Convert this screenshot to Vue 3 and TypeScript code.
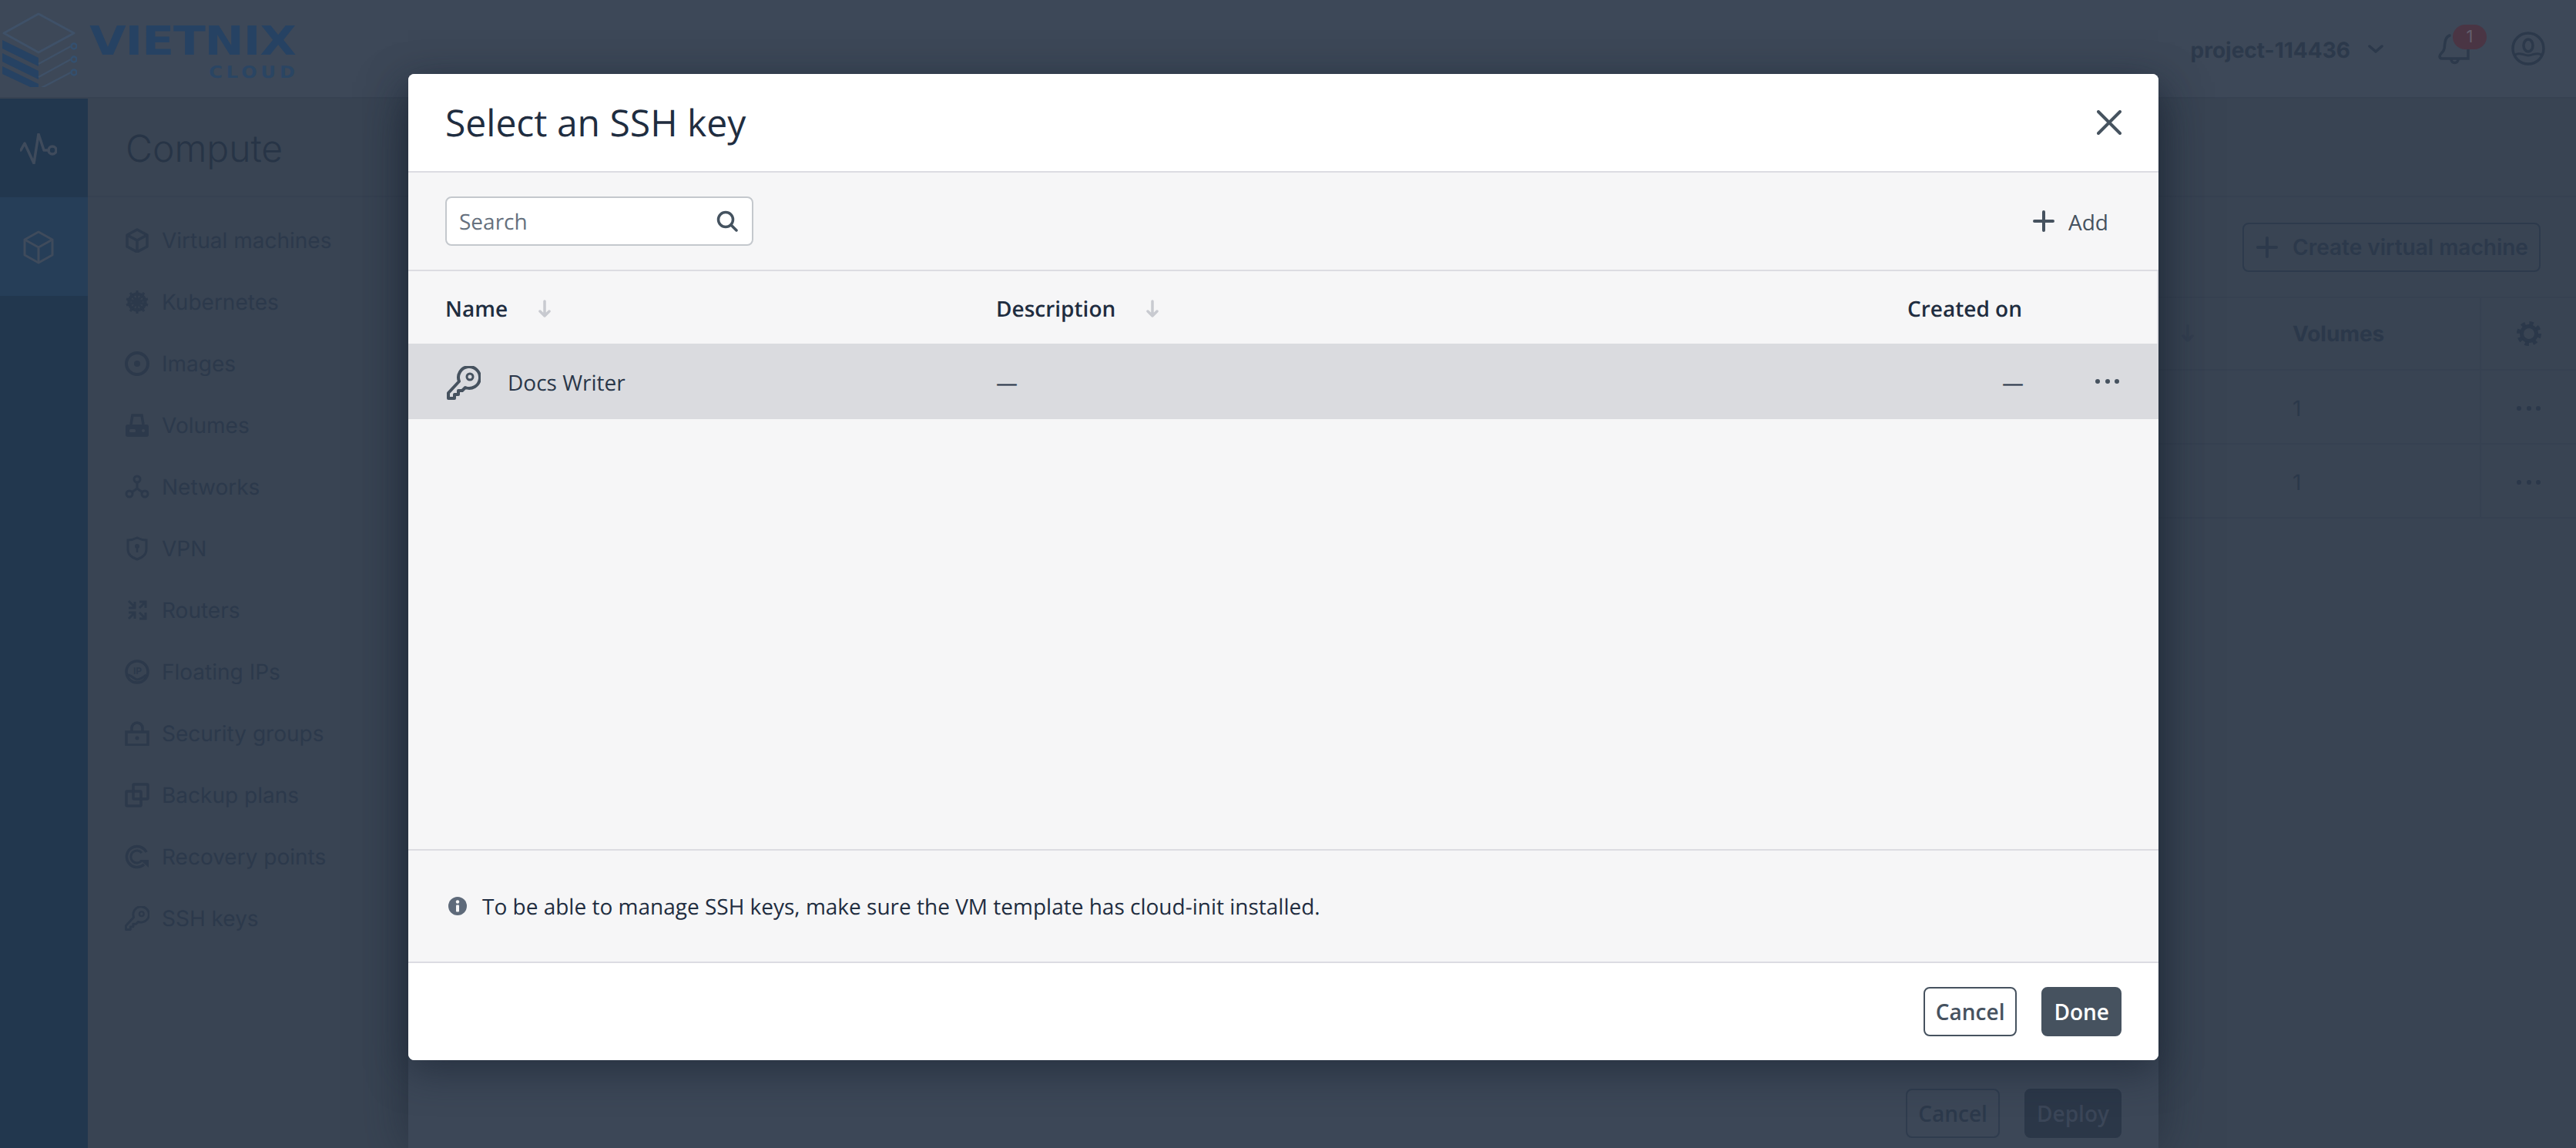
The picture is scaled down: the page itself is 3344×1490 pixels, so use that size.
<script setup lang="ts">
interface NavItem {
  name: string
  icon: string
}

const keyIcon =
  '<path d="M2 42V35L16 20A14 14 0 1 1 24 28L20 32H15V37H10V42Z" fill="none" stroke="currentColor" stroke-width="4" stroke-linejoin="round"/><circle cx="30" cy="14" r="4" fill="none" stroke="currentColor" stroke-width="3"/>'

const navItems: NavItem[] = [
  {
    name: 'Virtual machines',
    icon: '<g fill="none" stroke="currentColor" stroke-width="3.5" stroke-linejoin="round"><path d="M16 2 29 9v15l-13 7-13-7V9Z"/><path d="M3 9l13 7 13-7M16 16v15"/></g>'
  },
  {
    name: 'Kubernetes',
    icon: '<g fill="none" stroke="currentColor"><circle cx="16" cy="16" r="10.5" stroke-width="4"/><path stroke-width="3" d="M16 1v30M2 12l28 8M2 20l28-8M7 28 25 4M25 28 7 4"/></g>'
  },
  {
    name: 'Images',
    icon: '<circle cx="16" cy="16" r="14" fill="none" stroke="currentColor" stroke-width="4"/><circle cx="16" cy="16" r="4" fill="currentColor"/>'
  },
  {
    name: 'Volumes',
    icon: '<path d="M8 15 10 3h12l2 12" fill="none" stroke="currentColor" stroke-width="3.5"/><rect x="1" y="15" width="30" height="16" rx="3" fill="currentColor"/><rect x="6" y="21" width="8" height="4" rx="1.5" fill="#3a4554"/><circle cx="24" cy="23" r="2" fill="#3a4554"/>'
  },
  {
    name: 'Networks',
    icon: '<g fill="none" stroke="currentColor" stroke-width="3"><circle cx="16" cy="6" r="4"/><circle cx="6" cy="25" r="4"/><circle cx="26" cy="25" r="4"/><path d="M16 10v8l-7 5M16 18l7 5"/></g>'
  },
  {
    name: 'VPN',
    icon: '<path d="M16 2c4 2 8 3 12 3v12c0 7-6 11-12 13C10 28 4 24 4 17V5c4 0 8-1 12-3Z" fill="none" stroke="currentColor" stroke-width="3"/><circle cx="16" cy="13" r="3" fill="currentColor"/><path d="M16 13v8" stroke="currentColor" stroke-width="2.5"/>'
  },
  {
    name: 'Routers',
    icon: '<path d="M5 4l8 8M13 5v8H5M19 13l8-8M19 5h8v8M5 27l8-8M5 19h8v8M19 19l8 8M27 19v8h-8" fill="none" stroke="currentColor" stroke-width="3"/>'
  },
  {
    name: 'Floating IPs',
    icon: '<circle cx="16" cy="16" r="14" fill="none" stroke="currentColor" stroke-width="3.5"/><text x="16.5" y="19" text-anchor="middle" font-family="Inter, sans-serif" font-size="12" font-weight="700" fill="currentColor">IP</text><path d="M4 20c5 0 8 6 12 6s7-2 12-6" fill="none" stroke="currentColor" stroke-width="3"/>'
  },
  {
    name: 'Security groups',
    icon: '<path d="M9 15V9a7 7 0 0 1 14 0v6" fill="none" stroke="currentColor" stroke-width="3.5"/><path d="M2 14h28v17H2Z" fill="none" stroke="currentColor" stroke-width="3.5"/><circle cx="16" cy="22" r="2.5" fill="currentColor"/>'
  },
  {
    name: 'Backup plans',
    icon: '<g fill="none" stroke="currentColor" stroke-width="3.5"><rect x="2" y="11" width="19" height="19" rx="1"/><rect x="11" y="2" width="19" height="19" rx="1"/></g>'
  },
  {
    name: 'Recovery points',
    icon: '<path d="M28 10A13.5 13.5 0 1 0 25 26" fill="none" stroke="currentColor" stroke-width="3.5"/><path d="M22 11a8 8 0 1 0 0 10" fill="none" stroke="currentColor" stroke-width="3"/><path d="M20 20h11v10Z" fill="currentColor"/>'
  },
  { name: 'SSH keys', icon: keyIcon }
]

const tableRows = [1, 2]
</script>

<template>
  <div class="page">
    <header class="topbar">
      <div class="brand">
        <svg class="brand-mark" width="100" height="110" viewBox="0 0 100 110">
          <path d="M5 40 50 15l46 25-46 25Z" fill="none" stroke="#3f5168" stroke-width="3" stroke-linejoin="round" />
          <path d="M3 50l47 23v11L3 61ZM3 67l47 23v11L3 78ZM3 84l47 23v9L3 94Z" fill="#264263" transform="translate(0 -1)" />
          <path d="M50 80 92 57M50 97 92 74M50 113 92 91" fill="none" stroke="#3f5168" stroke-width="2.5" />
          <circle cx="96" cy="57" r="3.5" fill="none" stroke="#34506f" stroke-width="2.5" />
          <circle cx="96" cy="74" r="3.5" fill="none" stroke="#34506f" stroke-width="2.5" />
          <circle cx="96" cy="91" r="3.5" fill="none" stroke="#34506f" stroke-width="2.5" />
        </svg>
        <div class="brand-words">
          <span class="brand-name">VIETNIX</span>
          <span class="brand-sub">CLOUD</span>
        </div>
      </div>
      <div class="top-actions">
        <span class="project">project-114436</span>
        <svg class="chevron" width="20" height="12" viewBox="0 0 20 12">
          <path d="M2 2l8 7 8-7" fill="none" stroke="currentColor" stroke-width="3.5" stroke-linecap="round" stroke-linejoin="round" />
        </svg>
        <div class="bell">
          <svg width="44" height="42" viewBox="0 0 44 42">
            <path d="M16 3C10 5 10 12 9 20c-1 6-6 6-6 10q0 3 3 3h34V20" fill="none" stroke="currentColor" stroke-width="3.5" stroke-linecap="round" />
            <path d="M18 34a4.5 4.5 0 0 0 9 0" fill="none" stroke="currentColor" stroke-width="3.5" />
          </svg>
          <span class="badge">1</span>
        </div>
        <svg class="avatar" width="44" height="44" viewBox="0 0 44 44">
          <g fill="none" stroke="currentColor">
            <circle cx="22" cy="22" r="20" stroke-width="3.5" />
            <ellipse cx="22" cy="18" rx="6" ry="8" stroke-width="3.5" />
            <path d="M5 30c6-4 11 1 17 1s11-5 17-1" stroke-width="3" />
          </g>
        </svg>
      </div>
    </header>

    <div class="shell">
      <aside class="rail">
        <div class="rail-item">
          <svg width="48" height="40" viewBox="0 0 48 40">
            <g fill="none" stroke="currentColor" stroke-width="3.5" stroke-linecap="round" stroke-linejoin="round">
              <path d="M1 22 6 13l12 26 6-38 7 21h6" />
              <circle cx="42" cy="22" r="5" />
            </g>
          </svg>
        </div>
        <div class="rail-item rail-active">
          <svg width="40" height="44" viewBox="0 0 40 44">
            <g fill="none" stroke="currentColor" stroke-width="3" stroke-linejoin="round">
              <path d="M20 2 38 12v20L20 42 2 32V12Z" />
              <path d="M2 12l18 10 18-10M20 22v20" />
            </g>
          </svg>
        </div>
      </aside>

      <main class="main">
        <div class="page-title">
          <h1>Compute</h1>
        </div>
        <div class="main-body">
          <nav class="side-nav">
            <a v-for="item in navItems" :key="item.name" class="nav-item">
              <svg
                class="nav-icon"
                width="32"
                height="32"
                :viewBox="item.name === 'SSH keys' ? '0 0 44 44' : '0 0 32 32'"
                v-html="item.icon"
              ></svg>
              <span>{{ item.name }}</span>
            </a>
          </nav>
          <section class="content">
            <div class="content-bar">
              <button class="create-btn">
                <svg width="28" height="28" viewBox="0 0 28 28">
                  <path d="M14 2v24M2 14h24" fill="none" stroke="currentColor" stroke-width="4" stroke-linecap="round" />
                </svg>
                <span>Create virtual machine</span>
              </button>
            </div>
            <div class="bg-table">
              <div class="bg-row bg-head">
                <div class="bg-sort">
                  <svg width="16" height="24" viewBox="0 0 16 24">
                    <path d="M8 2v19M2 15l6 6 6-6" fill="none" stroke="currentColor" stroke-width="3.5" stroke-linecap="round" stroke-linejoin="round" />
                  </svg>
                </div>
                <div class="bg-vol">Volumes</div>
                <div class="bg-act">
                  <svg width="32" height="32" viewBox="0 0 32 32">
                    <circle cx="16" cy="16" r="9.5" fill="none" stroke="currentColor" stroke-width="5" />
                    <circle cx="16" cy="16" r="13.5" fill="none" stroke="currentColor" stroke-width="5" stroke-dasharray="5.3 5.3" />
                  </svg>
                </div>
              </div>
              <div v-for="row in tableRows" :key="row" class="bg-row bg-data">
                <div class="bg-sort"></div>
                <div class="bg-vol bg-num">1</div>
                <div class="bg-act">
                  <span class="dots"><i></i><i></i><i></i></span>
                </div>
              </div>
            </div>
          </section>
        </div>
      </main>
    </div>

    <!-- dimmed wizard panel behind the dialog -->
    <div class="under-panel">
      <div class="under-footer">
        <button class="under-btn">Cancel</button>
        <button class="under-btn under-primary">Deploy</button>
      </div>
    </div>

    <!-- dialog -->
    <section class="modal">
      <header class="modal-head">
        <h2>Select an SSH key</h2>
        <svg width="32" height="32" viewBox="0 0 32 32">
          <path d="M2 2l28 28M30 2 2 30" fill="none" stroke="#46535f" stroke-width="4" stroke-linecap="round" />
        </svg>
      </header>

      <div class="modal-tools">
        <div class="search">
          <span class="search-text">Search</span>
          <svg width="28" height="28" viewBox="0 0 28 28">
            <circle cx="12" cy="12" r="9.5" fill="none" stroke="#44525f" stroke-width="3.5" />
            <path d="M19 19l7 7" stroke="#44525f" stroke-width="3.5" stroke-linecap="round" />
          </svg>
        </div>
        <button class="add-btn">
          <svg width="28" height="28" viewBox="0 0 28 28">
            <path d="M14 2v24M2 14h24" fill="none" stroke="currentColor" stroke-width="4" stroke-linecap="round" />
          </svg>
          <span class="add-label">Add</span>
        </button>
      </div>

      <div class="key-table">
        <div class="key-row key-head">
          <div class="key-cell">
            <span>Name</span>
            <svg class="sort" width="16" height="24" viewBox="0 0 16 24">
              <path d="M8 2v19M2 15l6 6 6-6" fill="none" stroke="currentColor" stroke-width="3.5" stroke-linecap="round" stroke-linejoin="round" />
            </svg>
          </div>
          <div class="key-cell">
            <span>Description</span>
            <svg class="sort" width="16" height="24" viewBox="0 0 16 24">
              <path d="M8 2v19M2 15l6 6 6-6" fill="none" stroke="currentColor" stroke-width="3.5" stroke-linecap="round" stroke-linejoin="round" />
            </svg>
          </div>
          <div class="key-cell key-end">Created on</div>
          <div class="key-cell"></div>
        </div>
        <div class="key-row key-selected">
          <div class="key-cell key-name">
            <svg width="44" height="44" viewBox="0 0 44 44" v-html="keyIcon"></svg>
            <span>Docs Writer</span>
          </div>
          <div class="key-cell">—</div>
          <div class="key-cell key-end">—</div>
          <div class="key-cell key-actions">
            <span class="dots"><i></i><i></i><i></i></span>
          </div>
        </div>
      </div>

      <div class="notice">
        <svg width="24" height="24" viewBox="0 0 24 24">
          <circle cx="12" cy="12" r="12" fill="#5e6a7a" />
          <circle cx="12" cy="6.5" r="2.2" fill="#f6f6f7" />
          <rect x="10" y="10.5" width="4" height="9" rx="1" fill="#f6f6f7" />
        </svg>
        <span class="notice-text">To be able to manage SSH keys, make sure the VM template has cloud-init installed.</span>
      </div>

      <footer class="modal-foot">
        <button class="btn btn-ghost">Cancel</button>
        <button class="btn btn-solid">Done</button>
      </footer>
    </section>
  </div>
</template>

<style>
html,
body {
  margin: 0;
  overflow: hidden;
}
</style>

<style scoped>
.page {
  position: relative;
  width: 3344px;
  height: 1490px;
  overflow: hidden;
  background: #394453;
  color: #2b384a;
  font-family: Inter, "Noto Sans", sans-serif;
  font-size: 28px;
  text-rendering: geometricPrecision;
  display: flex;
  flex-direction: column;
}

/* top bar */
.topbar {
  height: 128px;
  flex: none;
  box-sizing: border-box;
  background: #3d4858;
  border-bottom: 2px solid #374252;
  display: flex;
  align-items: center;
  justify-content: space-between;
  padding-right: 40px;
}
.brand {
  display: flex;
  align-items: flex-start;
  height: 128px;
}
.brand-mark {
  margin-top: 4px;
  flex: none;
}
.brand-words {
  display: flex;
  flex-direction: column;
  align-items: flex-end;
  margin-left: 14px;
  margin-top: 27px;
  width: 270px;
  color: #264263;
}
.brand-name {
  font-family: "DejaVu Sans", sans-serif;
  font-size: 52px;
  line-height: 56px;
  font-weight: 700;
  letter-spacing: -1px;
  transform: scaleX(1.18);
  transform-origin: right center;
}
.brand-sub {
  font-size: 24px;
  line-height: 22px;
  font-weight: 700;
  letter-spacing: 5px;
  color: #2a4563;
  font-family: "DejaVu Sans", sans-serif;
  transform: scaleY(0.9);
  margin-top: 1px;
  margin-right: -4px;
}
.top-actions {
  display: flex;
  align-items: center;
  color: #2c394b;
}
.project {
  font-weight: 700;
  font-size: 28px;
  padding-top: 3px;
}
.chevron {
  margin-left: 23px;
  margin-top: 2px;
}
.bell {
  position: relative;
  margin-left: 70px;
  width: 44px;
  height: 42px;
  margin-top: 2px;
}
.bell svg {
  display: block;
}
.badge {
  position: absolute;
  left: 20px;
  top: -11px;
  width: 44px;
  height: 32px;
  border-radius: 16px;
  background: #4a3544;
  color: #625e6b;
  font-size: 22px;
  line-height: 32px;
  text-align: center;
}
.avatar {
  margin-left: 52px;
}

/* shell */
.shell {
  flex: 1;
  display: flex;
  min-height: 0;
}
.rail {
  width: 114px;
  flex: none;
  background: #22374e;
  color: #3f4b5c;
}
.rail-item {
  height: 128px;
  box-sizing: border-box;
  padding-right: 14px;
  display: flex;
  align-items: center;
  justify-content: center;
}
.rail-item svg {
  margin-top: 2px;
}
.rail-active {
  background: #263e58;
}
.main {
  flex: 1;
  display: flex;
  flex-direction: column;
  min-width: 0;
}
.page-title {
  height: 128px;
  flex: none;
  box-sizing: border-box;
  border-bottom: 2px solid #364151;
  padding: 3px 0 0 49px;
  display: flex;
  align-items: center;
}
.page-title h1 {
  margin: 0;
  font-size: 48px;
  font-weight: 300;
  color: #273446;
}
.main-body {
  flex: 1;
  display: flex;
  min-height: 0;
}
.side-nav {
  width: 420px;
  flex: none;
  box-sizing: border-box;
  padding: 16px 0 0 48px;
}
.nav-item {
  height: 80px;
  display: flex;
  align-items: center;
  gap: 16px;
  color: #2c394b;
}
.nav-icon {
  flex: none;
}
.content {
  flex: 1;
  min-width: 0;
}
.content-bar {
  height: 129px;
  box-sizing: border-box;
  padding: 33px 46px 0 0;
  display: flex;
  justify-content: flex-end;
}
.create-btn {
  width: 387px;
  height: 64px;
  box-sizing: border-box;
  border: 2px solid #2d3a4c;
  border-radius: 8px;
  background: transparent;
  color: #2c394b;
  font: 600 28px Inter, sans-serif;
  padding: 0 0 0 16px;
  display: flex;
  align-items: center;
  gap: 19px;
}
.bg-table {
  border-top: 2px solid #364151;
}
.bg-row {
  height: 96px;
  box-sizing: border-box;
  border-bottom: 2px solid #364151;
  display: grid;
  grid-template-columns: 1fr 243px 125px;
  align-items: stretch;
}
.bg-head {
  height: 94px;
}
.bg-data > div {
  padding-top: 3px;
}
.bg-row > div {
  display: flex;
  align-items: center;
}
.bg-sort {
  justify-content: flex-end;
  padding-right: 128px;
  color: #343f50;
}
.bg-head .bg-vol {
  font-weight: 700;
}
.bg-num {
  font-weight: 400;
}
.bg-act {
  border-left: 2px solid #364151;
  padding-left: 46px;
}

/* behind panel */
.under-panel {
  position: absolute;
  left: 530px;
  top: 128px;
  bottom: 0;
  width: 2272px;
  background: #3c4757;
  box-shadow: 0 0 60px rgba(25, 35, 50, 0.55);
  display: flex;
  flex-direction: column;
  justify-content: flex-end;
}
.under-footer {
  display: flex;
  justify-content: flex-end;
  gap: 32px;
  padding: 0 48px 13px 0;
}
.under-btn {
  height: 64px;
  box-sizing: border-box;
  min-width: 122px;
  border: 2px solid #2f3c4e;
  border-radius: 8px;
  background: transparent;
  color: #2c394b;
  font: 600 28px "Open Sans", sans-serif;
  padding: 0 14px;
}
.under-primary {
  min-width: 125px;
  background: #2b3748;
  border-color: #2b3748;
  color: #3b4658;
}

/* dialog */
.modal {
  position: absolute;
  left: 530px;
  top: 96px;
  width: 2272px;
  height: 1280px;
  background: #f6f6f7;
  border-radius: 8px;
  overflow: hidden;
  box-shadow: 0 14px 50px rgba(25, 35, 50, 0.6);
  font-family: "Open Sans", sans-serif;
  color: #1f2d40;
  display: flex;
  flex-direction: column;
}
.modal-head {
  height: 128px;
  flex: none;
  box-sizing: border-box;
  background: #fff;
  border-bottom: 2px solid #dcdce2;
  padding: 0 48px;
  display: flex;
  align-items: center;
  justify-content: space-between;
}
.modal-head h2 {
  margin: 0;
  padding-top: 2px;
  font-size: 48px;
  font-weight: 400;
  line-height: 64px;
}
.modal-tools {
  height: 128px;
  flex: none;
  box-sizing: border-box;
  border-bottom: 2px solid #dcdce2;
  padding: 0 48px;
  display: flex;
  align-items: center;
  justify-content: space-between;
}
.search {
  width: 400px;
  height: 64px;
  box-sizing: border-box;
  background: #fff;
  border: 2px solid #c4c8cd;
  border-radius: 8px;
  padding: 0 18px 0 16px;
  display: flex;
  align-items: center;
  justify-content: space-between;
  margin-top: -1px;
}
.search-text {
  color: #66717e;
  font-size: 28px;
  padding-top: 3px;
}
.add-btn {
  border: 0;
  background: transparent;
  padding: 0 17px 0 0;
  color: #46525f;
  font: 500 28px "Open Sans", sans-serif;
  display: flex;
  align-items: center;
  gap: 18px;
}
.add-label {
  padding-top: 2px;
}
.key-table {
  flex: 1;
  min-height: 0;
  border-bottom: 2px solid #dcdce2;
}
.key-row {
  display: grid;
  grid-template-columns: 715px 1fr 303px 127px;
  padding: 0 48px;
  align-items: center;
}
.key-head {
  height: 94px;
  box-sizing: border-box;
  padding-top: 4px;
  font-weight: 600;
  font-size: 28px;
  border-right: 2px solid #e2e2e7;
}
.key-selected {
  height: 98px;
  box-sizing: border-box;
  padding-top: 4px;
  background: #dadbdf;
  font-size: 28px;
  color: #2a3749;
}
.key-cell {
  display: flex;
  align-items: center;
}
.key-end {
  justify-content: flex-end;
}
.sort {
  margin-left: 40px;
  color: #c8cad0;
}
.key-name {
  gap: 35px;
  color: #46525f;
}
.key-name svg {
  margin-left: 2px;
}
.key-name span {
  color: #2a3749;
}
.key-actions {
  justify-content: flex-end;
  padding-right: 3px;
  margin-top: -4px;
  color: #46525f;
}
.dots {
  display: inline-flex;
  gap: 6.5px;
}
.dots i {
  width: 6px;
  height: 6px;
  border-radius: 50%;
  background: currentColor;
}
.notice {
  height: 146px;
  flex: none;
  box-sizing: border-box;
  border-bottom: 2px solid #dcdce2;
  padding-left: 52px;
  display: flex;
  align-items: center;
  gap: 20px;
  font-size: 28px;
}
.notice-text {
  padding-top: 1px;
}
.modal-foot {
  height: 126px;
  flex: none;
  background: #fff;
  box-sizing: border-box;
  padding: 0 48px 0 0;
  display: flex;
  align-items: center;
  justify-content: flex-end;
  gap: 32px;
}
.btn {
  height: 64px;
  box-sizing: border-box;
  border-radius: 8px;
  font: 600 28px "Open Sans", sans-serif;
  padding: 0 14px;
}
.btn-ghost {
  border: 2px solid #46525f;
  background: #fff;
  color: #46525f;
}
.btn-solid {
  border: 2px solid #46525f;
  background: #46525f;
  color: #fff;
}
</style>
